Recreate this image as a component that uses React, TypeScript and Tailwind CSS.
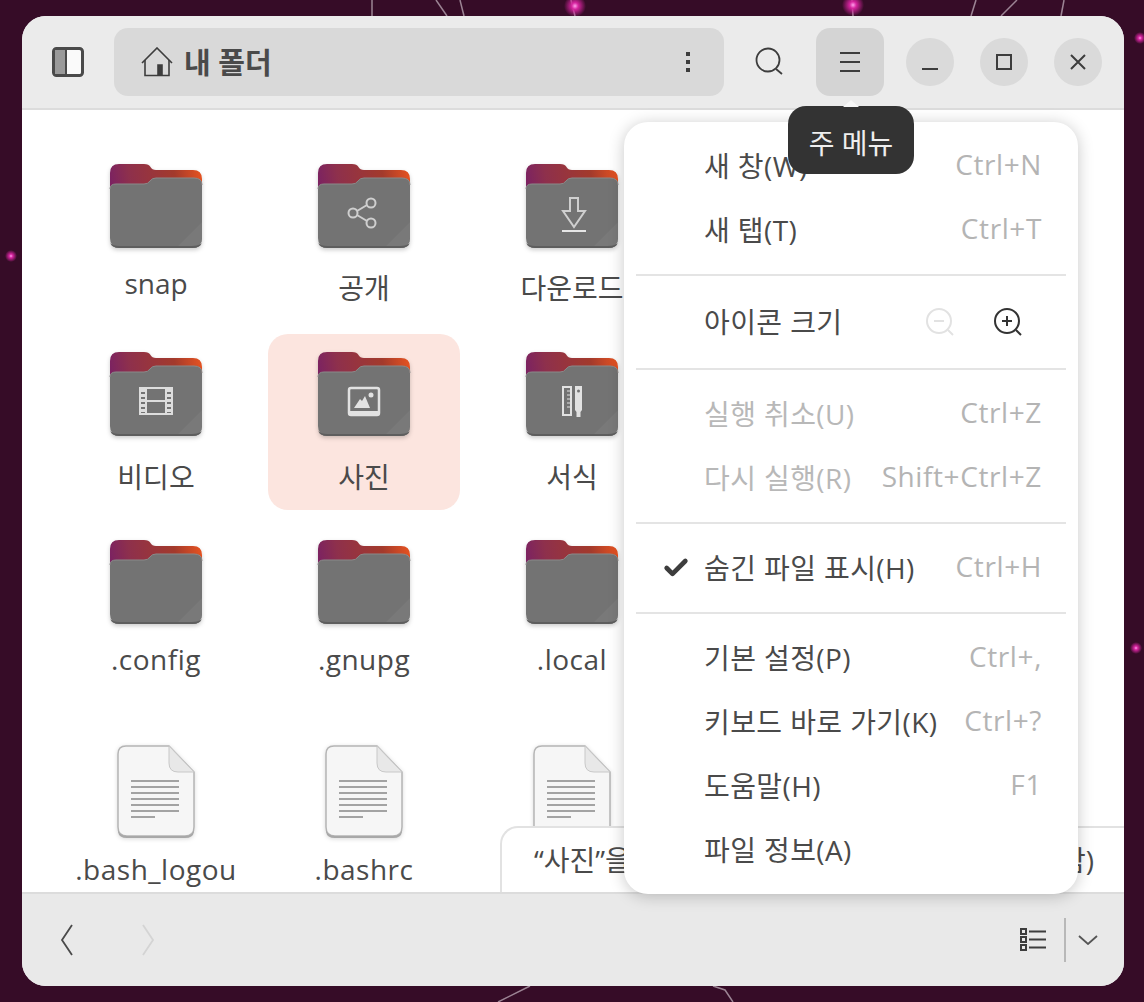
import React from 'react';
import { Check } from 'lucide-react';

const FONT = "font-['Open_Sans','Noto_Sans_CJK_KR',sans-serif]";

function Wallpaper() {
  return (
    <svg className="absolute inset-0" width="1144" height="1002" viewBox="0 0 1144 1002">
      <defs>
        <radialGradient id="glow">
          <stop offset="0" stopColor="#ffa0ea" />
          <stop offset="0.3" stopColor="#d6249f" />
          <stop offset="1" stopColor="#d6249f" stopOpacity="0" />
        </radialGradient>
      </defs>
      <g stroke="#9c8494" strokeWidth="1.5" fill="none">
        <path d="M372 0 L372 16" />
        <path d="M436 0 L447 16" />
        <path d="M460 0 L464 16" />
        <path d="M976 0 L971 16" />
        <path d="M1017 0 L1001 16" />
        <path d="M1064 0 L1061 16" />
        <path d="M852 0 L853 16" />
        <path d="M571 0 L575 16" />
        <path d="M498 1002 L530 986" />
        <path d="M713 986 L725 990 L733 1002" />
      </g>
      <circle cx="575" cy="6" r="11" fill="url(#glow)" />
      <circle cx="853" cy="5" r="11" fill="url(#glow)" />
      <circle cx="11" cy="256" r="6" fill="url(#glow)" />
      <circle cx="1140" cy="38" r="6" fill="url(#glow)" />
      <circle cx="1136" cy="648" r="6" fill="url(#glow)" />
    </svg>
  );
}

function FolderIcon({ id, children }: { id: string; children?: React.ReactNode }) {
  return (
    <svg width="96" height="96" viewBox="0 0 96 96" className="drop-shadow-[0_2px_2px_rgba(0,0,0,0.2)]">
      <defs>
        <linearGradient id={`tab-${id}`} x1="2" y1="22" x2="94" y2="6" gradientUnits="userSpaceOnUse">
          <stop offset="0" stopColor="#7b2262" />
          <stop offset="0.22" stopColor="#8e304c" />
          <stop offset="0.7" stopColor="#a33a2c" />
          <stop offset="1" stopColor="#e95420" />
        </linearGradient>
      </defs>
      <path d="M2 11 Q2 2 11 2 H36 Q41 2 42.500 5 Q44 8 48 8 H85 Q94 8 94 17 V40 H2 Z" fill={`url(#tab-${id})`} />
      <path d="M2 27 Q2 22 8 22 H36 Q40 22 42 19 Q44 16 48 16 H86 Q94 16 94 23 V76 Q94 86 84 86 H12 Q2 86 2 76 Z" fill="#737373" />
      <path d="M2 27 Q2 22 8 22 H36 Q40 22 42 19 Q44 16 48 16 H86 Q94 16 94 23" fill="none" stroke="#8a8a8a" strokeWidth="1" />
      <path d="M70 84 L94 60 V76 Q94 84 84 84 Z" fill="#797979" />
      <path d="M2 80 Q3 86 12 86 H84 Q93 86 94 80 Q93 84 84 84 H12 Q3 84 2 80 Z" fill="#5e5e5e" />
      {children}
    </svg>
  );
}

function DocIcon() {
  return (
    <svg width="80" height="96" viewBox="0 0 80 96" className="drop-shadow-[0_1px_2px_rgba(0,0,0,0.15)]">
      <path d="M10 2 H53 L78 28 V83 Q78 92 69 92 H11 Q2 92 2 83 V10 Q2 2 10 2 Z" fill="#f6f6f6" stroke="#b5b5b5" strokeWidth="1.5" />
      <path d="M2 85 Q3 92 11 92 H69 Q77 92 78 85 V88 Q77 94 69 94 H11 Q3 94 2 88 Z" fill="#a8a8a8" />
      <path d="M53 2 V19 Q53 28 62 28 H78 Z" fill="#e8e8e8" stroke="#c8c8c8" strokeWidth="1" />
      <g stroke="#a3a3a3" strokeWidth="2">
        <path d="M15 37 H63" />
        <path d="M15 43 H63" />
        <path d="M15 49 H63" />
        <path d="M15 55 H63" />
        <path d="M15 61 H63" />
        <path d="M15 67 H63" />
        <path d="M15 73 H39" />
      </g>
    </svg>
  );
}

const glyph = { fill: 'none', stroke: '#cfcfcf', strokeWidth: 2 };

const glyphs: Record<string, React.ReactNode> = {
  share: (
    <g {...glyph}>
      <circle cx="37" cy="51" r="4.500" />
      <circle cx="55" cy="41" r="4.500" />
      <circle cx="55" cy="61" r="4.500" />
      <path d="M41 49 L51 43 M41 53 L51 59" />
    </g>
  ),
  download: (
    <g {...glyph}>
      <path d="M46 36 H54 V49 H61 L50 65 L39 49 H46 Z" />
      <path d="M38 69 H62" stroke="#e6e6e6" />
    </g>
  ),
  video: (
    <g>
      <path d="M32 38 H64 V64 H32 Z" fill="none" stroke="#dddddd" strokeWidth="2" />
      <path d="M38 38 V64 M58 38 V64" stroke="#dddddd" strokeWidth="2" />
      <path d="M38 51 H58" stroke="#dddddd" strokeWidth="2" />
      <path d="M35 39 V63 M61 39 V63" stroke="#dddddd" strokeWidth="6" strokeDasharray="3 2" />
    </g>
  ),
  photo: (
    <g>
      <rect x="33" y="38" width="30" height="27" rx="2" fill="none" stroke="#e2e2e2" strokeWidth="2.500" />
      <path d="M33 61 H63 V65 H33 Z" fill="#e2e2e2" />
      <path d="M38 58 L44 49 L46 51 L49 46 L54 58 Z" fill="#e2e2e2" />
      <circle cx="55" cy="45" r="2.500" fill="#e2e2e2" />
    </g>
  ),
  templates: (
    <g>
      <rect x="39" y="37" width="8" height="28" fill="none" stroke="#e2e2e2" strokeWidth="2" />
      <path d="M43 41 H46 M43 45 H46 M43 49 H46 M43 53 H46 M43 57 H46" stroke="#e2e2e2" strokeWidth="1" />
      <path d="M51 36 H58 V60 L56.500 62 V67 H52.500 V62 L51 60 Z" fill="#e2e2e2" />
      <circle cx="54.500" cy="41" r="1.500" fill="#737373" />
    </g>
  ),
};

type ItemProps = {
  name: React.ReactNode;
  id: string;
  icon?: string;
  kind?: 'folder' | 'doc';
  selected?: boolean;
  labelClass?: string;
};

function Item({ name, id, icon, kind = 'folder', selected = false, labelClass = 'mt-[5px] leading-[40px]' }: ItemProps) {
  return (
    <div className={`flex h-[176px] flex-col items-center rounded-[20px] pt-[16px] ${selected ? 'bg-[#fce5df]' : ''}`}>
      <div className="flex h-[96px] w-[96px] shrink-0 items-start justify-center">
        {kind === 'folder' ? (
          <FolderIcon id={id}>{icon ? glyphs[icon] : null}</FolderIcon>
        ) : (
          <DocIcon />
        )}
      </div>
      <span className={`whitespace-nowrap text-center text-[28px] text-[#4a4a4a] ${labelClass}`}>{name}</span>
    </div>
  );
}

type MenuRow = { label: string; keys: string; disabled?: boolean; checked?: boolean };

function Row({ label, keys, disabled, checked }: MenuRow) {
  return (
    <div className="flex h-[64px] items-center pl-[38px] pr-[36px]">
      <span className="flex w-[42px] shrink-0 items-center">
        {checked && <Check size={28} strokeWidth={4} className="text-[#3d3d3d]" />}
      </span>
      <span className={`flex-1 whitespace-nowrap text-[28px] tracking-[0.4px] ${disabled ? 'text-[#b8b8b8]' : 'text-[#4a4a4a]'}`}>{label}</span>
      <span className="mb-[4px] whitespace-nowrap text-[28px] tracking-[0.6px] text-[#b4b4b4]">{keys}</span>
    </div>
  );
}

function ZoomGlyph({ plus, color }: { plus?: boolean; color: string }) {
  return (
    <svg width="30" height="30" viewBox="0 0 30 30" fill="none" stroke={color} strokeWidth="2" className="shrink-0">
      <circle cx="14" cy="14" r="12" />
      <path d="M23 23 L28 28" />
      <path d="M9 14 H19" />
      {plus && <path d="M14 9 V19" />}
    </svg>
  );
}

function MainMenu() {
  return (
    <div className="absolute left-[624px] top-[122px] z-10 flex h-[772px] w-[454px] flex-col rounded-[24px] bg-white pt-[12px] shadow-[0_2px_16px_rgba(0,0,0,0.22)]">
      <Row label="새 창(W)" keys="Ctrl+N" />
      <Row label="새 탭(T)" keys="Ctrl+T" />
      <div className="mx-[12px] my-[12px] h-[2px] bg-[#e4e4e4]" />
      <div className="flex h-[68px] items-center pl-[80px] pr-[55px]">
        <span className="flex-1 text-[28px] tracking-[0.4px] text-[#4a4a4a]">아이콘 크기</span>
        <span className="mr-[38px]"><ZoomGlyph color="#e2e2e2" /></span>
        <ZoomGlyph plus color="#333333" />
      </div>
      <div className="mx-[12px] my-[12px] h-[2px] bg-[#e4e4e4]" />
      <Row label="실행 취소(U)" keys="Ctrl+Z" disabled />
      <Row label="다시 실행(R)" keys="Shift+Ctrl+Z" disabled />
      <div className="mx-[12px] my-[12px] h-[2px] bg-[#e4e4e4]" />
      <Row label="숨긴 파일 표시(H)" keys="Ctrl+H" checked />
      <div className="mx-[12px] my-[12px] h-[2px] bg-[#e4e4e4]" />
      <Row label="기본 설정(P)" keys="Ctrl+," />
      <Row label="키보드 바로 가기(K)" keys="Ctrl+?" />
      <Row label="도움말(H)" keys="F1" />
      <Row label="파일 정보(A)" keys="" />
    </div>
  );
}

function Tooltip() {
  return (
    <div className="absolute left-[788px] top-[106px] z-20 flex h-[68px] w-[126px] items-center justify-center rounded-[18px] bg-[#333333] pt-[6px] text-[28px] text-[#eeeeee]">
      <svg width="16" height="7" viewBox="0 0 16 7" className="absolute left-[55px] top-[-6px]">
        <path d="M0 7 L8 0 L16 7 Z" fill="#f7f7f7" />
      </svg>
      주 메뉴
    </div>
  );
}

function WindowButton({ children }: { children: React.ReactNode }) {
  return <div className="flex h-[48px] w-[48px] items-center justify-center rounded-full bg-[#dadada]">{children}</div>;
}

export default function App() {
  return (
    <div className={`relative h-[1002px] w-[1144px] overflow-hidden bg-[#360c27] pl-[22px] pt-[16px] ${FONT}`}>
      <Wallpaper />
      <div className="relative flex h-[970px] w-[1102px] flex-col overflow-hidden rounded-[24px] bg-white">
        <header className="flex h-[94px] shrink-0 items-center border-b-2 border-[#dcdcdc] bg-[#ebebeb] pl-[30px] pr-[22px]">
          <svg width="32" height="30" viewBox="0 0 32 30" className="shrink-0">
            <rect x="1.500" y="1.500" width="29" height="27" rx="3" fill="#fafafa" stroke="#4a4a4a" strokeWidth="3" />
            <path d="M3 3 H13 V27 H3 Z" fill="#9a9a9a" />
            <path d="M14 3 V27" stroke="#4a4a4a" strokeWidth="2" />
          </svg>
          <div className="ml-[30px] flex h-[68px] w-[610px] shrink-0 items-center rounded-[14px] bg-[#d9d9d9] pl-[27px] pr-[34px]">
            <svg width="32" height="30" viewBox="0 0 32 30" fill="none" stroke="#3d3d3d" strokeWidth="1.600" className="shrink-0">
              <path d="M1 16 L16 1 L31 16" />
              <path d="M4 13 V28.500 H28 V13" />
              <path d="M17 28 V18 H21 V28 Z" fill="#3d3d3d" />
            </svg>
            <span className="ml-[11px] mt-[2px] flex-1 text-[29px] font-bold text-[#4a4a4a]">내 폴더</span>
            <svg width="4" height="20" viewBox="0 0 4 20" fill="#3d3d3d" className="shrink-0">
              <rect x="0" y="0" width="4" height="4" />
              <rect x="0" y="8" width="4" height="4" />
              <rect x="0" y="16" width="4" height="4" />
            </svg>
          </div>
          <div className="ml-[22px] flex h-[68px] w-[48px] items-center justify-center">
            <svg width="30" height="30" viewBox="0 0 30 30" fill="none" stroke="#3d3d3d" strokeWidth="1.800">
              <circle cx="13" cy="13" r="11.500" />
              <path d="M21 22 L27 27" />
            </svg>
          </div>
          <div className="ml-[22px] flex h-[68px] w-[68px] items-center justify-center rounded-[14px] bg-[#d4d4d4]">
            <svg width="20" height="20" viewBox="0 0 20 20" stroke="#3d3d3d" strokeWidth="2">
              <path d="M0 1 H20 M0 10 H20 M0 19 H20" />
            </svg>
          </div>
          <div className="ml-auto flex gap-[26px]">
            <WindowButton>
              <svg width="16" height="2" viewBox="0 0 16 2" className="mt-[13px]"><rect width="16" height="2" fill="#3d3d3d" /></svg>
            </WindowButton>
            <WindowButton>
              <svg width="16" height="16" viewBox="0 0 16 16" fill="none" stroke="#3d3d3d" strokeWidth="2"><rect x="1" y="1" width="14" height="14" /></svg>
            </WindowButton>
            <WindowButton>
              <svg width="16" height="16" viewBox="0 0 16 16" fill="none" stroke="#3d3d3d" strokeWidth="2"><path d="M1 1 L15 15 M15 1 L1 15" /></svg>
            </WindowButton>
          </div>
        </header>

        <main className="relative min-h-0 flex-1 overflow-hidden bg-white">
          <div className="grid grid-cols-[192px_192px_192px] gap-x-[16px] pl-[38px] pt-[36px] [grid-template-rows:188px_188px_206px_176px]">
            <Item id="snap" name="snap" />
            <Item id="public" name="공개" icon="share" labelClass="mt-[10px] leading-[40px]" />
            <Item id="downloads" name="다운로드" icon="download" labelClass="mt-[10px] leading-[40px]" />
            <Item id="videos" name="비디오" icon="video" labelClass="mt-[11px] leading-[40px]" />
            <Item id="pictures" name="사진" icon="photo" selected labelClass="mt-[11px] leading-[40px]" />
            <Item id="templates" name="서식" icon="templates" labelClass="mt-[11px] leading-[40px]" />
            <Item id="config" name=".config" labelClass="mt-[5px] leading-[40px] tracking-[0.5px]" />
            <Item id="gnupg" name=".gnupg" labelClass="mt-[5px] leading-[40px] tracking-[0.5px]" />
            <Item id="local" name=".local" labelClass="mt-[5px] leading-[40px] tracking-[0.5px]" />
            <Item id="logout" name={<>.bash_logou<br />t</>} kind="doc" labelClass="mt-[14px] leading-[31px] tracking-[0.5px]" />
            <Item id="bashrc" name=".bashrc" kind="doc" labelClass="mt-[14px] leading-[31px] tracking-[0.5px]" />
            <Item id="profile" name=".profile" kind="doc" labelClass="mt-[14px] leading-[31px] tracking-[0.5px]" />
          </div>
          <div className="absolute bottom-0 right-0 flex h-[66px] w-[624px] items-center justify-between rounded-tl-[18px] border-l-2 border-t-2 border-[#e2e2e2] bg-white pl-[32px] pr-[30px] text-[28px] text-[#4a4a4a]">
            <span>“사진”을 선택함</span>
            <span>(항목 6개 포함)</span>
          </div>
        </main>

        <footer className="flex h-[94px] shrink-0 items-center border-t-2 border-[#dcdcdc] bg-[#e9e9e9] pl-[38px] pr-[26px]">
          <svg width="13" height="32" viewBox="0 0 13 32" fill="none" stroke="#4a4a4a" strokeWidth="1.800" className="shrink-0">
            <path d="M12 1 L2 16 L12 31" />
          </svg>
          <svg width="13" height="32" viewBox="0 0 13 32" fill="none" stroke="#d4d4d4" strokeWidth="1.800" className="ml-[69px] shrink-0">
            <path d="M1 1 L11 16 L1 31" />
          </svg>
          <div className="ml-auto flex items-center">
            <svg width="26" height="24" viewBox="0 0 26 24" className="shrink-0">
              <g fill="none" stroke="#3d3d3d" strokeWidth="2">
                <rect x="1" y="1" width="5" height="5" />
                <rect x="1" y="9" width="5" height="5" />
                <rect x="1" y="17" width="5" height="5" />
                <path d="M9 3.500 H26 M9 11.500 H26 M9 19.500 H26" />
              </g>
            </svg>
            <div className="ml-[18px] h-[44px] w-[2px] bg-[#b8b8b8]" />
            <svg width="20" height="10" viewBox="0 0 20 10" fill="none" stroke="#555555" strokeWidth="1.800" className="ml-[12px] shrink-0">
              <path d="M1 1 L10 9 L19 1" />
            </svg>
          </div>
        </footer>
      </div>
      <MainMenu />
      <Tooltip />
    </div>
  );
}
